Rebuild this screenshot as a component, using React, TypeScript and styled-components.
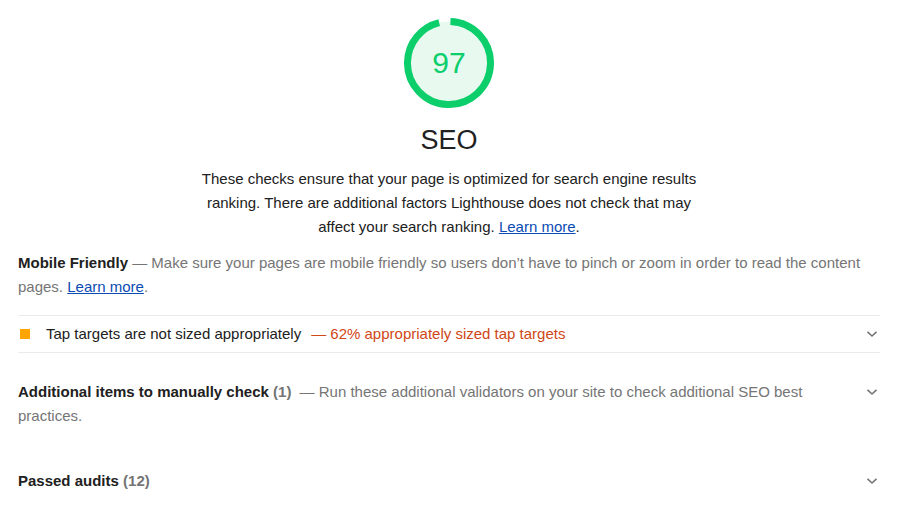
import React from "react";
import styled, { createGlobalStyle } from "styled-components";

const Global = createGlobalStyle`
  html, body { margin: 0; padding: 0; background: #fff; }
  body {
    font-family: "Liberation Sans", Arial, sans-serif;
    font-size: 15px;
    line-height: 24px;
    color: #212121;
  }
`;

const Page = styled.div`
  padding: 0 22px 0 18px;
`;

const Header = styled.div`
  display: flex;
  flex-direction: column;
  align-items: center;
  padding-top: 18px;
`;

const GaugeWrap = styled.div`
  position: relative;
  width: 90px;
  height: 90px;
`;

const GaugeValue = styled.div`
  position: absolute;
  inset: 0;
  display: flex;
  align-items: center;
  justify-content: center;
  font-size: 30px;
  color: #0cce6b;
  line-height: 1;
`;

const Title = styled.div`
  margin-top: 18px;
  font-size: 27px;
  line-height: 28px;
  color: #212121;
`;

const Description = styled.p`
  margin: 13px 0 0;
  max-width: 510px;
  text-align: center;
  color: #212121;
`;

const Link = styled.a`
  color: #0b4bb3;
  text-decoration: underline;
`;

const Group = styled.div<{ $top: number }>`
  margin-top: ${(p) => p.$top}px;
`;

const GroupHeader = styled.div`
  display: flex;
  align-items: flex-start;
  gap: 24px;
`;

const GroupText = styled.div`
  flex: 1;
`;

const GroupTitle = styled.span`
  font-weight: bold;
  color: #212121;
`;

const Count = styled.span`
  font-weight: bold;
  color: #757575;
  margin-right: 4px;
`;

const GroupDesc = styled.span`
  color: #757575;
`;

const Rule = styled.div`
  margin-top: 16px;
  border-top: 1px solid #ebebeb;
`;

const AuditRow = styled.div`
  display: flex;
  align-items: center;
  height: 36px;
  border-bottom: 1px solid #ebebeb;
`;

const Square = styled.span`
  width: 10px;
  height: 10px;
  background: #ffa400;
  margin: 0 16px 0 2px;
  flex: none;
`;

const AuditTitle = styled.span`
  color: #212121;
`;

const AuditValue = styled.span`
  color: #d04716;
  margin-left: 10px;
  flex: 1;
`;

const ChevronBox = styled.span`
  width: 16px;
  height: 24px;
  display: flex;
  align-items: center;
  justify-content: center;
  flex: none;
`;

const Chevron = () => (
  <ChevronBox>
    <svg width="12" height="8" viewBox="0 0 12 8">
      <path d="M1.5 1.8 L6 6 L10.5 1.8" fill="none" stroke="#757575" strokeWidth="1.6" />
    </svg>
  </ChevronBox>
);

const Gauge = () => {
  const r = 41.5;
  const c = 2 * Math.PI * r;
  const gap = 4;
  return (
    <GaugeWrap>
      <svg width="90" height="90" viewBox="0 0 90 90">
        <circle cx="45" cy="45" r={r} fill="#e8f9f0" />
        <circle
          cx="45"
          cy="45"
          r={r}
          fill="none"
          stroke="#0cce6b"
          strokeWidth="7"
          strokeDasharray={`${c * 0.97 - gap} ${c}`}
          transform={`rotate(-88 45 45)`}
        />
      </svg>
      <GaugeValue>97</GaugeValue>
    </GaugeWrap>
  );
};

export default function App() {
  return (
    <>
      <Global />
      <Page>
        <Header>
          <Gauge />
          <Title>SEO</Title>
          <Description>
            These checks ensure that your page is optimized for search engine results ranking. There are
            additional factors Lighthouse does not check that may affect your search ranking.{" "}
            <Link href="#">Learn more</Link>.
          </Description>
        </Header>

        <Group $top={12}>
          <GroupText>
            <GroupTitle>Mobile Friendly</GroupTitle>
            <GroupDesc>
              {" "}— Make sure your pages are mobile friendly so users don’t have to pinch or zoom in order to
              read the content pages. <Link href="#">Learn more</Link>.
            </GroupDesc>
          </GroupText>
          <Rule />
          <AuditRow>
            <Square />
            <AuditTitle>Tap targets are not sized appropriately</AuditTitle>
            <AuditValue>— 62% appropriately sized tap targets</AuditValue>
            <Chevron />
          </AuditRow>
        </Group>

        <Group $top={27}>
          <GroupHeader>
            <GroupText>
              <GroupTitle>Additional items to manually check</GroupTitle> <Count>(1)</Count>
              <GroupDesc>
                {" "}— Run these additional validators on your site to check additional SEO best practices.
              </GroupDesc>
            </GroupText>
            <Chevron />
          </GroupHeader>
        </Group>

        <Group $top={41}>
          <GroupHeader>
            <GroupText>
              <GroupTitle>Passed audits</GroupTitle> <Count>(12)</Count>
            </GroupText>
            <Chevron />
          </GroupHeader>
        </Group>
      </Page>
    </>
  );
}
